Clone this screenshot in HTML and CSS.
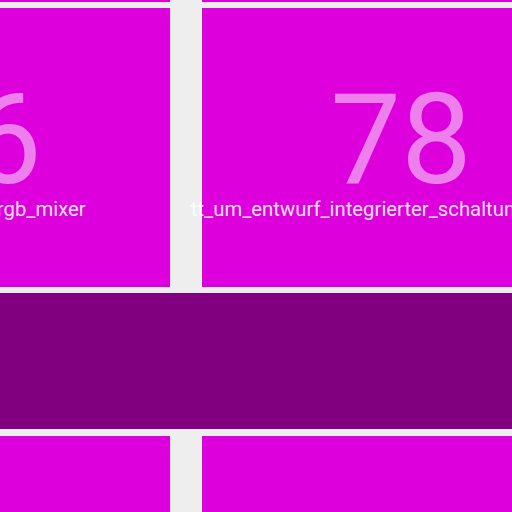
FILE: index.html
```html
<!DOCTYPE html>
<html>
<head>
<meta charset="utf-8">
<link rel="stylesheet" href="styles.css">
</head>
<body>
<div class="board">
  <div class="row">
    <div class="tile"></div>
    <div class="tile"></div>
  </div>
  <div class="row">
    <div class="tile">
      <div class="num">76</div>
      <div class="label">tt_um_led_arry_rgb_mixer</div>
    </div>
    <div class="tile">
      <div class="num">78</div>
      <div class="label">tt_um_entwurf_integrierter_schaltungen_hs_24</div>
    </div>
  </div>
  <div class="band"></div>
  <div class="row">
    <div class="tile"></div>
    <div class="tile"></div>
  </div>
</div>
</body>
</html>
```
FILE: styles.css
```css
html, body {
  margin: 0;
  padding: 0;
  background: #eeeeee;
  overflow: hidden;
  width: 512px;
  height: 512px;
}
.board {
  margin-top: -277px;
  display: flex;
  flex-direction: column;
  gap: 6.5px;
}
.row {
  display: flex;
  gap: 32px;
  margin-left: -228px;
}
.tile {
  flex: 0 0 398px;
  min-width: 0;
  height: 278.7px;
  background: #dd00dd;
  display: flex;
  flex-direction: column;
  align-items: center;
  font-family: Roboto, "Noto Sans", sans-serif;
  white-space: nowrap;
}
.num {
  font-size: 126px;
  font-weight: 400;
  color: rgba(255, 255, 255, 0.5);
  line-height: 1;
  margin-top: 69px;
  height: 112px;
}
.label {
  font-size: 20.3px;
  color: rgba(255, 255, 255, 0.9);
  line-height: 1;
  margin-top: 10px;
}
.band {
  height: 136px;
  background: #800080;
}
```
